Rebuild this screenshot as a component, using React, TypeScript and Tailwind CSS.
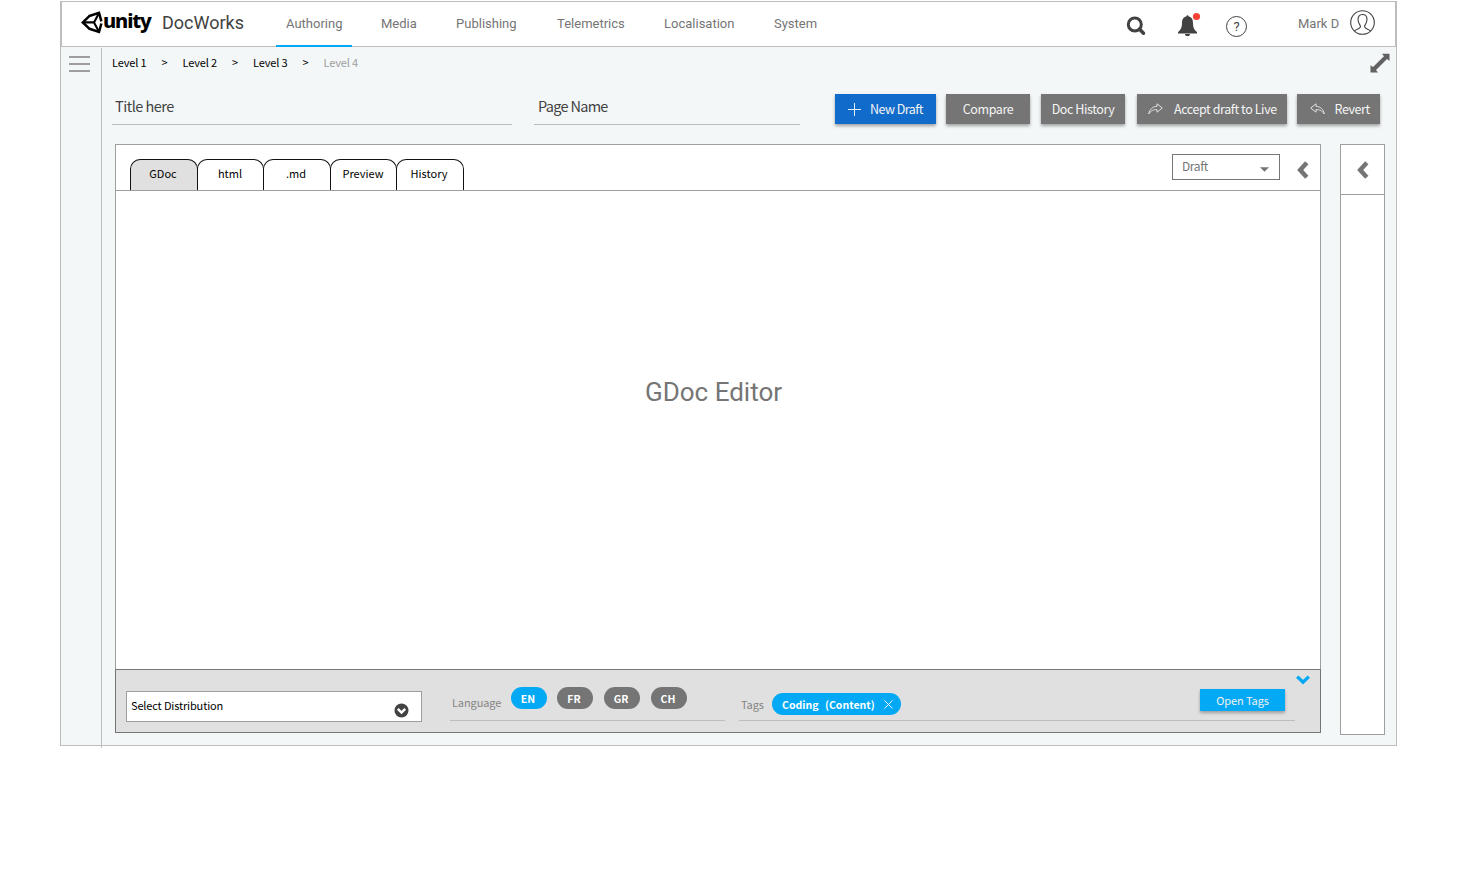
import React from "react";

const sans = "font-['Noto_Sans_CJK_SC',sans-serif]";

function Logo() {
  return (
    <svg className="w-[22px] h-[23px] shrink-0" viewBox="0 0 22 23" fill="none" stroke="#000">
      <path d="M8.300 5.200 1.800 11.400 8.300 17.600M7.600 5.300 18 1.800 20.400 10.300M20.400 12.500 18 21 7.600 17.500" strokeWidth="2.500" />
      <path d="M2 11.400H13M18 2 13 11.400 18 20.800" strokeWidth="2.100" />
    </svg>
  );
}

function Chevron({ className }: { className: string }) {
  return (
    <svg className={className} viewBox="0 0 12 18" fill="none" stroke="#757575" strokeWidth="4.500">
      <path d="M9.800 1.800 3.200 9l6.600 7.200" />
    </svg>
  );
}

function ShareArrow({ className }: { className: string }) {
  return (
    <svg className={className} viewBox="0 0 15 12" fill="none" stroke="#ececec" strokeWidth="0.9" strokeLinejoin="round">
      <path d="M9 .8 14.3 5 9 9.2V6.7C5.500 6.500 3 7.500.7 11 1.500 6.500 4.500 3.500 9 3.300Z" />
    </svg>
  );
}

const liga = "[font-feature-settings:'liga'_1,'clig'_1]";
const btn = `h-[30px] shrink-0 flex items-center text-[12.5px] leading-[30px] tracking-[-0.42px] [font-feature-settings:'liga'_1,'clig'_1] text-[#f4f4f4] shadow-[0_2px_3px_rgba(0,0,0,0.35)] whitespace-nowrap`;
const pill = "w-[36px] h-[22px] rounded-full text-center pr-[2px]";
const tab = "mt-[14px] h-[31px] rounded-t-[10px] border-x border-t border-[#111] text-center";

export default function App() {
  return (
    <div className={`w-[1464px] h-[869px] bg-white pl-[60px] pt-px overflow-hidden ${sans}`}>
      <div className="w-[1337px] h-[745px] border-x border-b border-[#bdbdbd] bg-[#f3f7f8]">
        <header className="h-[46px] border border-[#bdbdbd] bg-white flex items-start font-['Roboto',sans-serif]">
          <div className="flex items-center h-[40px] ml-[19px] w-[81px]">
            <Logo />
            <span className="font-['Noto_Sans',sans-serif] font-extrabold text-[20px] leading-[22px] text-black tracking-[-1.1px] h-[24px]">unity</span>
          </div>
          <div className="text-[18px] leading-[42px] text-[#424242] w-[114px]">DocWorks</div>
          <nav className="flex h-[45px] text-[13px] leading-[43px] text-[#757575] w-[850px]">
            <div className="w-[76px] pl-[10px] h-[45px] border-b-2 border-[#03a9f4]">Authoring</div>
            <div className="ml-[29px]">Media</div>
            <div className="ml-[39.25px]">Publishing</div>
            <div className="ml-[40.5px]">Telemetrics</div>
            <div className="ml-[39.25px]">Localisation</div>
            <div className="ml-[39.5px]">System</div>
          </nav>
          <svg className="w-[20px] h-[20px] mt-[14px] shrink-0" viewBox="0 0 20 20" fill="none" stroke="#424242">
            <circle cx="8.800" cy="8.500" r="6.500" strokeWidth="3" />
            <path d="M13.500 13.200l4 4" strokeWidth="3.500" strokeLinecap="round" />
          </svg>
          <svg className="w-[24px] h-[24px] ml-[31px] mt-[10px] shrink-0" viewBox="0 0 24 24" fill="#424242">
            <path d="M9.500 4.200a1 1 0 0 1 2 0C15 5 16 8 16 11c0 5 1.500 7 4 9v1.500H1V20c2.500-2 4-4 4-9 0-3 1-6 4.500-6.800ZM8 22h5a2.500 2.300 0 0 1-5 0Z" />
            <circle cx="19.500" cy="4.500" r="3.600" fill="#f44336" />
          </svg>
          <div className="ml-[25px] mt-[14px] w-[21px] h-[21px] shrink-0 rounded-full border border-[#424242] text-[#424242] text-[13px] leading-[19px] text-center">?</div>
          <div className="ml-[51px] w-[52px] text-[13px] leading-[43px] text-[#757575] shrink-0">Mark D</div>
          <svg className="w-[25px] h-[25px] mt-[8px] shrink-0" viewBox="0 0 25 25" fill="none" stroke="#424242" strokeWidth="1.100">
            <circle cx="12.500" cy="12.500" r="11.800" />
            <path d="M4.500 21C6 19 10.500 19 10.500 16.500 10.500 15 8 13.500 8 9.500 8 6.500 9.500 4.500 12.500 4.500S17 6.500 17 9.500C17 13.500 14.500 15 14.500 16.500 14.500 19 19 19 20.500 21" />
          </svg>
        </header>

        <div className="flex h-[698px]">
          <aside className="w-[41px] h-[700px] mt-px border-r border-[#bdbdbd] shrink-0 pt-[8px] pl-[8px] flex flex-col gap-[5px]">
            <div className="w-[21px] h-[2px] bg-[#9e9e9e]" />
            <div className="w-[21px] h-[2px] bg-[#9e9e9e]" />
            <div className="w-[21px] h-[2px] bg-[#9e9e9e]" />
          </aside>

          <main className="w-[1294px] shrink-0">
            <div className="flex h-[47px] text-[11px] leading-[31px] tracking-[-0.15px] text-black pl-[10px]">
              <span className="w-[49.5px]">Level 1</span>
              <span className="w-[21px]">&gt;</span>
              <span className="w-[49.5px]">Level 2</span>
              <span className="w-[21px]">&gt;</span>
              <span className="w-[49.5px]">Level 3</span>
              <span className="w-[21px]">&gt;</span>
              <span className="text-[#9e9e9e]">Level 4</span>
              <svg className="w-[20px] h-[20px] ml-auto mr-[6px] mt-[6px]" viewBox="0 0 20 20" fill="#616161">
                <path d="M12 .7H19.500V8L17 6.100 6 16.900 8 19.500H.5V12.200L3 14.100 14 3.300Z" />
              </svg>
            </div>

            <div className="flex h-[50px] pl-[10px]">
              <div className="w-[400px] h-[31px] border-b border-[#bdbdbd] pl-[3px] text-[14.500px] leading-[23px] tracking-[-0.5px] text-[#424242]">Title here</div>
              <div className="ml-[22px] w-[266px] h-[31px] border-b border-[#bdbdbd] pl-[4px] text-[14.500px] leading-[23px] tracking-[-0.7px] text-[#424242]">Page Name</div>
              <button className={`${btn} ml-[35px] w-[101px] bg-[#116bca] pl-[13px]`}>
                <svg className="w-[13px] h-[13px] mr-[9px]" viewBox="0 0 13 13" stroke="#e6effa" strokeWidth="1"><path d="M0 6.500H13M6.500 0V13" /></svg>
                <span className="tracking-[-0.55px]">New Draft</span>
              </button>
              <button className={`${btn} ml-[10px] w-[84px] bg-[#757575] justify-center`}>Compare</button>
              <button className={`${btn} ml-[11px] w-[84px] bg-[#757575] justify-center`}>Doc History</button>
              <button className={`${btn} ml-[12px] w-[150px] bg-[#757575] pl-[11px]`}>
                <ShareArrow className="w-[15px] h-[12px] mr-[11px]" />
                Accept draft to Live
              </button>
              <button className={`${btn} ml-[10px] w-[83px] bg-[#757575] pl-[13px]`}>
                <ShareArrow className="w-[15px] h-[12px] mr-[9.500px] -scale-x-100" />
                Revert
              </button>
            </div>

            <div className="flex items-start pl-[13px]">
              <div className="w-[1206px]">
                <section className="h-[525px] border-x border-t border-[#9e9e9e] bg-white">
                  <div className="flex h-[46px] border-b border-[#9e9e9e] text-[11px] leading-[27px] text-black">
                    <div className={`${tab} ml-[14px] w-[68px] bg-[#e0e0e0] pr-[2px]`}>GDoc</div>
                    <div className={`${tab} -ml-px w-[67px] pr-[1px]`}>html</div>
                    <div className={`${tab} -ml-px w-[68px] pr-[2px]`}>.md</div>
                    <div className={`${tab} -ml-px w-[67px] pr-px`}>Preview</div>
                    <div className={`${tab} -ml-px w-[68px] pr-[2px]`}>History</div>
                    <div className={`ml-[708px] mt-[9px] w-[108px] h-[26px] border border-[#757575] flex justify-between pl-[9px] pr-[10px] text-[12px] leading-[22px] tracking-[-0.4px] text-[#757575] ${liga}`}>
                      Draft
                      <svg className="w-[9px] h-[5px] mt-[12px]" viewBox="0 0 9 5" fill="#757575"><path d="M0 .3H9L4.500 4.800Z" /></svg>
                    </div>
                    <Chevron className="w-[12px] h-[18px] ml-[17px] mt-[16px]" />
                  </div>
                  <div className="pt-[186px] pl-[529px] font-['Roboto',sans-serif] text-[26px] leading-[30px] text-[#757575]">GDoc Editor</div>
                </section>

                <footer className="h-[64px] border border-[#757575] bg-[#e0e0e0] flex">
                  <div className="ml-[10px] mt-[21px] w-[296px] h-[31px] border border-[#9e9e9e] bg-white flex justify-between pl-[4px] pr-[12px] text-[11px] leading-[26px] tracking-[-0.15px] text-black">
                    Select Distribution
                    <svg className="w-[15px] h-[15px] mt-[11px]" viewBox="0 0 15 15"><circle cx="7.500" cy="7.500" r="7" fill="#424242" /><path d="M3.800 5.800 7.500 9.500 11.200 5.800" fill="none" stroke="#fff" strokeWidth="2.400" /></svg>
                  </div>
                  <div className="ml-[28px] mt-[17px] w-[275px] h-[34px] border-b border-[#bdbdbd] flex text-[10.500px] leading-[24px] font-bold text-white">
                    <span className="w-[61px] pl-[2px] pt-[3px] font-normal text-[11px] tracking-[-0.1px] text-[#858585]">Language</span>
                    <span className={`${pill} bg-[#03a9f4]`}>EN</span>
                    <span className={`${pill} ml-[10px] bg-[#757575]`}>FR</span>
                    <span className={`${pill} ml-[11px] bg-[#757575]`}>GR</span>
                    <span className={`${pill} ml-[11px] bg-[#757575]`}>CH</span>
                  </div>
                  <div className="ml-[14px] mt-[17px] w-[556px] h-[34px] border-b border-[#bdbdbd] flex text-[11px] leading-[24px]">
                    <span className="w-[33px] pl-[2px] pt-[5px] tracking-[-0.1px] text-[#858585]">Tags</span>
                    <span className="mt-[6px] w-[129px] h-[22px] rounded-full bg-[#03a9f4] text-white text-[10.500px] font-bold pl-[10px] flex">
                      <span className="w-[43px]">Coding</span>
                      <span className="w-[59px]">(Content)</span>
                      <svg className="w-[9px] h-[9px] mt-[7px]" viewBox="0 0 9 9" stroke="#fff" strokeWidth="0.900"><path d="M.5.5l8 8M8.500.5l-8 8" /></svg>
                    </span>
                    <button className="ml-[299px] mt-[2px] w-[85px] h-[22px] bg-[#03a9f4] text-[#f1f1f1] leading-[22px] tracking-[-0.1px] shadow-[0_2px_3px_rgba(0,0,0,0.3)]">Open Tags</button>
                  </div>
                  <svg className="w-[14px] h-[10px] ml-px mt-[5px]" viewBox="0 0 14 10" fill="none" stroke="#03a9f4" strokeWidth="3.400"><path d="M1.200 1.600 7 7.200 12.800 1.600" /></svg>
                </footer>
              </div>

              <aside className="ml-[19px] w-[45px] h-[591px] border border-[#9e9e9e] bg-white">
                <div className="h-[50px] border-b border-[#9e9e9e] pl-[16px] pt-[16px]">
                  <Chevron className="w-[12px] h-[18px]" />
                </div>
              </aside>
            </div>
          </main>
        </div>
      </div>
    </div>
  );
}
